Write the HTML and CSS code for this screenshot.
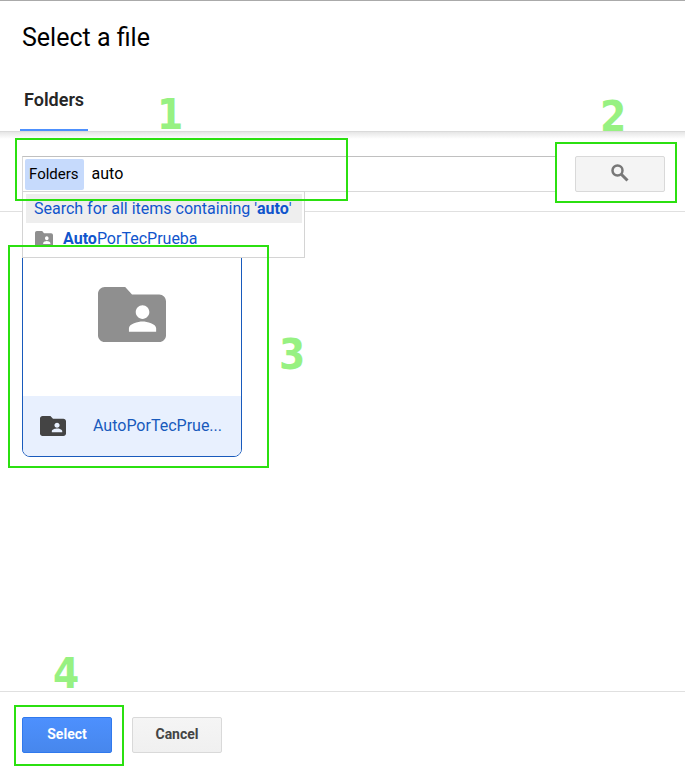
FILE: index.html
```html
<!DOCTYPE html>
<html lang="en">
<head>
<meta charset="utf-8">
<meta name="viewport" content="width=device-width, initial-scale=1">
<title>Select a file</title>
<link rel="stylesheet" href="styles.css">
</head>
<body>
<svg width="0" height="0" class="sprite" aria-hidden="true">
  <symbol id="shared-folder" viewBox="2 4 20 16" preserveAspectRatio="none">
    <path fill-rule="evenodd" d="M20 6.200h-8L10 4H4c-1.100 0-2 .9-2 2v12c0 1.100.9 2 2 2h16c1.100 0 2-.9 2-2V8.200c0-1.100-.9-2-2-2zm-4.900 3.100c1.100 0 2 .9 2 2s-.9 2-2 2-2-.9-2-2 .9-2 2-2zm4 7.700h-8v-1c0-1.330 2.670-2 4-2s4 .67 4 2v1z"/>
  </symbol>
</svg>
<main class="dialog">
  <header class="header">
    <h1 class="title">Select a file</h1>
    <nav class="tabs"><a class="tab" href="#folders">Folders</a></nav>
  </header>

  <form class="toolbar">
    <div class="search">
      <div class="field">
        <label class="chip" for="query">Folders</label>
        <input class="query" id="query" type="text" value="auto" autocomplete="off">
      </div>
      <ul class="suggestions">
        <li><a class="suggestion active" href="#all"><span>Search for all items containing '<b>auto</b>'</span></a></li>
        <li><a class="suggestion" href="#item"><svg class="icon-small"><use href="#shared-folder"/></svg><span><b>Auto</b>PorTecPrueba</span></a></li>
      </ul>
      <span class="mark mark-search"></span>
      <span class="step step-search">1</span>
    </div>
    <div class="submit">
      <button class="button search-button" type="button" aria-label="Search">
        <svg class="icon-search" viewBox="0 0 18 18"><circle cx="6.500" cy="6.500" r="5" fill="none" stroke="#777" stroke-width="2.500"/><path d="M10.500 10.500l6 6" stroke="#777" stroke-width="3"/></svg>
      </button>
      <span class="mark mark-submit"></span>
      <span class="step step-submit">2</span>
    </div>
  </form>

  <section class="results" id="folders">
    <div class="card-wrap">
      <a class="card" id="item" href="#item">
        <span class="preview"><svg class="icon-large"><use href="#shared-folder"/></svg></span>
        <span class="caption"><svg class="icon-caption"><use href="#shared-folder"/></svg><span class="name">AutoPorTecPrue...</span></span>
      </a>
      <span class="mark mark-card"></span>
      <span class="step step-card">3</span>
    </div>
  </section>

  <footer class="footer">
    <div class="confirm">
      <button class="button primary" type="button">Select</button>
      <span class="mark mark-confirm"></span>
      <span class="step step-confirm">4</span>
    </div>
    <button class="button" type="button">Cancel</button>
  </footer>
</main>
</body>
</html>
```
FILE: styles.css
```css
* { box-sizing: border-box; }

body {
  margin: 0;
  background: #fff;
  color: #000;
  font: 16px/20px Roboto, sans-serif;
}

a { color: #1155cc; text-decoration: none; }
.sprite { position: absolute; }

.dialog {
  display: flex;
  flex-direction: column;
  min-height: 100vh;
  border-top: 1px solid #aaa;
}

.header { padding: 21px 20px 0; }
.title {
  margin: 0;
  padding-left: 2px;
  font-size: 25px;
  line-height: 32px;
  font-weight: 400;
}
.tabs { display: flex; padding-top: 17px; }
.tab {
  padding: 0 4px;
  border-bottom: 2px solid #4d90fe;
  color: #262626;
  font-size: 18px;
  line-height: 58px;
  font-weight: 600;
}

.toolbar {
  display: flex;
  gap: 18px;
  padding: 24px 20px 19px 22px;
  border-top: 1px solid #dadada;
  border-bottom: 1px solid #e0e0e0;
  background: linear-gradient(#e6e6e6, #fff 7px);
}
.search { position: relative; flex: 1; }
.field {
  display: flex;
  align-items: center;
  height: 36px;
  padding: 0 2px;
  border: 1px solid #d9d9d9;
  border-top-color: #c0c0c0;
  border-right: 0;
  background: #fff;
}
.chip {
  padding: 0 5px 0 4px;
  border-radius: 2px;
  background: #c6dafc;
  font-size: 15px;
  line-height: 31px;
}
.query {
  flex: 1;
  min-width: 0;
  padding: 0 8px;
  border: 0;
  outline: 0;
  background: none;
  color: #000;
  font: 16px/20px Roboto, sans-serif;
}

.suggestions {
  position: absolute;
  z-index: 2;
  top: 35px;
  left: 0;
  margin: 0;
  padding: 2px 2px 2px 3px;
  border: 1px solid #d4d4d4;
  background: #fff;
  list-style: none;
}
.suggestion {
  display: flex;
  gap: 10px;
  align-items: center;
  height: 32px;
  padding: 0 10px 0 9px;
  white-space: pre;
}
.active { height: 29px; padding-left: 8px; background: #eee; }
.suggestion b { font-weight: 700; }

.icon-small { width: 18px; height: 16px; fill: #8f8f8f; }
.icon-large { width: 68px; height: 55px; fill: #8f8f8f; }
.icon-caption { width: 26px; height: 20px; fill: #444; }
.icon-search { width: 18px; height: 18px; }

.button {
  width: 90px;
  height: 36px;
  padding: 0 0 2px;
  border: 1px solid #d9d9d9;
  border-radius: 2px;
  background: linear-gradient(#f5f5f5, #f0f0f0);
  color: #444;
  font: 700 14px/20px Roboto, sans-serif;
}
.primary {
  border-color: #3079ed;
  background: linear-gradient(#4d90fe, #4787ed);
  color: #fff;
}
.search-button { display: grid; place-items: center; background: #f4f4f4; }

.results { flex: 1; padding: 10px 22px; }
.card-wrap { position: relative; width: 220px; }
.card {
  display: block;
  overflow: hidden;
  border: 1px solid #185abc;
  border-radius: 8px;
  color: #185abc;
}
.preview {
  display: grid;
  place-items: center;
  height: 173px;
  padding-top: 10px;
}
.caption {
  display: flex;
  align-items: center;
  gap: 27px;
  height: 60px;
  padding: 0 17px;
  background: #e8f0fe;
}
.icon-caption { flex: none; }
.name { white-space: nowrap; }

.footer {
  display: flex;
  gap: 20px;
  padding: 25px 22px 14px;
  border-top: 1px solid #e0e0e0;
}

/* Tutorial callouts laid over the dialog */
.submit, .confirm { position: relative; }
.mark {
  position: absolute;
  z-index: 3;
  border: 2px solid #2be010;
  pointer-events: none;
}
.mark-search { top: -18px; left: -7px; width: 333px; height: 63px; }
.mark-submit { inset: -14px -12px -11px -20px; }
.mark-card { inset: 23px -27px -11px -14px; }
.mark-confirm { inset: -12px -12px -13px -8px; }
.step {
  position: absolute;
  z-index: 3;
  color: #97f182;
  font: 700 42px/48px "DejaVu Sans Condensed", "DejaVu Sans Mono", monospace;
  pointer-events: none;
}
.step-search { top: -65px; left: 135px; }
.step-submit { top: -63px; left: 25px; }
.step-card { top: 109px; left: 257px; }
.step-confirm { top: -67px; left: 31px; }
```
